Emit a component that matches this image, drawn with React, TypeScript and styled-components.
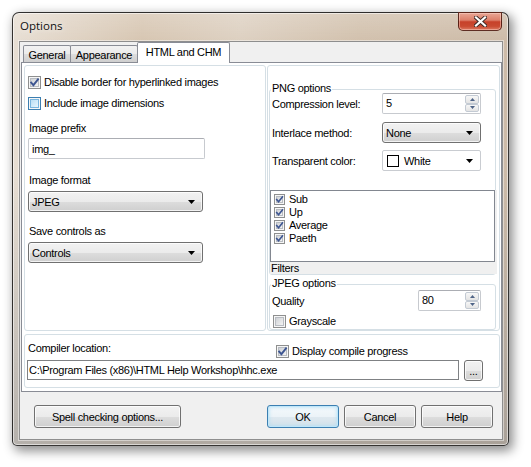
import React from 'react'
import styled, { createGlobalStyle, css } from 'styled-components'

const GlobalStyle = createGlobalStyle`
  html, body {
    margin: 0;
    padding: 0;
    background: #fff;
  }
  body {
    font-family: "Liberation Sans", Arial, sans-serif;
    font-size: 11px;
    letter-spacing: -0.3px;
    color: #000;
  }
`

const Screen = styled.div`
  width: 531px;
  height: 467px;
  padding: 12px 0 0 12px;
  box-sizing: border-box;
`

const Window = styled.div`
  width: 497px;
  height: 434px;
  box-sizing: border-box;
  display: flex;
  flex-direction: column;
  padding: 0 5px 5px 6px;
  border: 1px solid rgba(25, 25, 25, 0.85);
  border-radius: 7px 7px 5px 5px;
  background:
    linear-gradient(180deg, rgba(255, 255, 255, 0.2) 0px, rgba(255, 255, 255, 0) 28px, rgba(150, 150, 150, 0) 160px, rgba(140, 140, 140, 0.55) 100%),
    linear-gradient(90deg, #e7ded3 0%, #d7c6b2 26%, #ddd0c1 46%, #d2c1ad 70%, #cdbba8 100%);
  box-shadow: 3px 4px 11px 1px rgba(0, 0, 0, 0.45), inset 0 0 0 1px rgba(255, 255, 255, 0.55);
`

const TitleBar = styled.div`
  height: 28px;
  flex: none;
  display: flex;
  align-items: flex-start;
`

const Title = styled.span`
  margin: 5px 0 0 1px;
  font-family: "Open Sans", "Noto Sans", sans-serif;
  font-size: 11.5px;
  letter-spacing: 0;
  line-height: 16px;
  color: #111;
  text-shadow: 0 0 6px rgba(255, 255, 255, 0.9);
`

const CloseButton = styled.div`
  margin: -1px 1px 0 auto;
  width: 44px;
  height: 19px;
  box-sizing: border-box;
  border: 1px solid rgba(70, 25, 15, 0.85);
  border-radius: 0 0 5px 5px;
  background: linear-gradient(to bottom, #e9a695 0%, #dc7f6a 42%, #c7412a 52%, #c94a31 78%, #dd7a62 100%);
  box-shadow: inset 0 0 0 1px rgba(255, 220, 210, 0.45);
  display: flex;
  align-items: center;
  justify-content: center;
`

const Client = styled.div`
  flex: 1;
  display: flex;
  flex-direction: column;
  background: #f0f0f0;
  border: 1px solid #8e8e8e;
  box-shadow: 0 0 0 1px rgba(255, 255, 255, 0.45);
`

const TabStrip = styled.div`
  height: 20px;
  display: flex;
  align-items: flex-end;
  padding-left: 3px;
`

const Tab = styled.div<{ $active?: boolean; $w: number }>`
  width: ${p => p.$w}px;
  box-sizing: border-box;
  display: flex;
  align-items: center;
  justify-content: center;
  border: 1px solid #898c95;
  border-bottom: none;
  border-radius: 2px 2px 0 0;
  margin-right: -1px;
  ${p => p.$active
    ? css`
      height: 21px;
      margin-bottom: -1px;
      padding-bottom: 2px;
      background: #fff;
      position: relative;
      z-index: 1;
    `
    : css`
      height: 17px;
      padding-top: 1px;
      background: linear-gradient(to bottom, #f2f2f2 0%, #ebebeb 50%, #dddddd 51%, #cfcfcf 100%);
    `}
`

const TabPage = styled.div`
  margin-left: 1px;
  width: 481px;
  height: 330px;
  box-sizing: border-box;
  border: 1px solid #898c95;
  background: #fff;
  padding: 2px 1px 3px 2px;
  display: flex;
  flex-direction: column;
  gap: 3px;
`

const TopRow = styled.div`
  display: flex;
  gap: 1px;
  height: 266px;
`

const Group = styled.div<{ $w?: number; $h?: number }>`
  ${p => p.$w ? css`width: ${p.$w}px;` : css`flex: 1;`}
  ${p => p.$h ? css`height: ${p.$h}px;` : ''}
  box-sizing: border-box;
  border: 1px solid #d5dfe5;
  border-radius: 3px;
  display: flex;
  flex-direction: column;
`

const LeftGroup = styled(Group)`
  padding: 10px 0 0 3px;
`

const Label = styled.div<{ $mt?: number; $mb?: number }>`
  line-height: 13px;
  margin: ${p => p.$mt ?? 0}px 0 ${p => p.$mb ?? 0}px 1px;
`

const CheckRow = styled.div<{ $mb?: number; $gap?: number; $h?: number }>`
  display: flex;
  align-items: center;
  height: ${p => p.$h ?? 13}px;
  gap: ${p => p.$gap ?? 3}px;
  margin-bottom: ${p => p.$mb ?? 0}px;
  line-height: 13px;
`

const CheckOuter = styled.span<{ $size: number; $hover?: boolean }>`
  position: relative;
  flex: none;
  width: ${p => p.$size}px;
  height: ${p => p.$size}px;
  box-sizing: border-box;
  padding: 1px;
  border: 1px solid ${p => p.$hover ? '#3c7fb1' : '#8e8f8f'};
  background: #f6f6f6;
  display: flex;
`

const CheckInner = styled.span<{ $hover?: boolean }>`
  flex: 1;
  border: 1px solid ${p => p.$hover ? '#79b5de' : '#b8bcc2'};
  background: ${p => p.$hover
    ? 'linear-gradient(135deg, #b9def4 0%, #e7f5fd 100%)'
    : 'linear-gradient(135deg, #cfd2d6 0%, #f3f3f3 100%)'};
`

const CheckMark = styled.svg`
  position: absolute;
  left: -1px;
  top: -1px;
`

const TextBox = styled.div<{ $w: number; $h: number; $dark?: boolean }>`
  width: ${p => p.$w}px;
  height: ${p => p.$h}px;
  box-sizing: border-box;
  background: #fff;
  display: flex;
  align-items: center;
  padding-left: ${p => p.$dark ? 1 : 3}px;
  ${p => p.$dark
    ? css`border: 1px solid #7f8184;`
    : css`
      border: 1px solid #c7cacf;
      border-top-color: #abadb3;
      border-radius: 2px;
    `}
`

const ComboBox = styled.div<{ $w: number; $plain?: boolean }>`
  width: ${p => p.$w}px;
  height: 21px;
  box-sizing: border-box;
  display: flex;
  align-items: center;
  gap: 5px;
  padding: 0 7px 0 3px;
  ${p => p.$plain
    ? css`
      border: 1px solid #c9ccd1;
      border-radius: 2px;
      background: #fff;
      padding-left: 4px;
    `
    : css`
      border: 1px solid #707070;
      border-radius: 3px;
      background: linear-gradient(to bottom, #f2f2f2 0%, #ebebeb 50%, #dddddd 51%, #cfcfcf 100%);
      box-shadow: inset 0 0 0 1px rgba(255, 255, 255, 0.75);
    `}
`

const ComboText = styled.span`
  flex: 1;
`

const Swatch = styled.span`
  width: 12px;
  height: 12px;
  box-sizing: border-box;
  border: 1px solid #000;
  background: #fff;
  flex: none;
`

const SpinBox = styled.div<{ $w: number }>`
  width: ${p => p.$w}px;
  height: 21px;
  box-sizing: border-box;
  border: 1px solid #c7cacf;
  border-top-color: #abadb3;
  border-radius: 2px;
  background: #fff;
  display: flex;
  align-items: stretch;
  padding: 1px 1px 1px 3px;
`

const SpinValue = styled.span`
  flex: 1;
  line-height: 17px;
`

const SpinButtons = styled.div`
  width: 14px;
  display: flex;
  flex-direction: column;
`

const SpinButton = styled.div`
  flex: 1;
  box-sizing: border-box;
  border: 1px solid #c3cad3;
  border-radius: 2px;
  background: linear-gradient(to bottom, #f7f7f7, #e4e4e4);
  display: flex;
  align-items: center;
  justify-content: center;
`

const RightGroup = styled(Group)`
  padding: 0 3px 0 1px;
`

const FieldBox = styled.div<{ $mt: number; $pb?: number }>`
  margin-top: ${p => p.$mt}px;
  border: 1px solid #d5dfe5;
  border-radius: 3px;
  display: flex;
  flex-direction: column;
  padding-bottom: ${p => p.$pb ?? 0}px;
`

const Legend = styled.span`
  align-self: flex-start;
  margin: -8px 0 -2px 1px;
  padding: 0 1px;
  background: #fff;
  line-height: 13px;
`

const FieldRow = styled.div<{ $mt?: number }>`
  display: flex;
  align-items: center;
  margin-top: ${p => p.$mt ?? 0}px;
`

const FieldLabel = styled.span<{ $w: number }>`
  width: ${p => p.$w}px;
  padding-left: 2px;
  box-sizing: border-box;
`

const FiltersPanel = styled.div`
  margin: 19px -2px 0 0;
  background: #f0f0f0;
  display: flex;
  flex-direction: column;
`

const ListBox = styled.div`
  height: 72px;
  box-sizing: border-box;
  margin-right: 2px;
  border: 1px solid #828790;
  background: #fff;
  padding: 2px 0 0 3px;
  display: flex;
  flex-direction: column;
`

const FiltersCaption = styled.div`
  height: 12px;
  line-height: 12px;
  padding-left: 1px;
`

const CompilerGroup = styled(Group)`
  padding: 7px 0 0 2px;
`

const CompilerTop = styled.div`
  display: flex;
  align-items: flex-start;
  height: 18px;
`

const CompilerBottom = styled.div`
  display: flex;
  gap: 5px;
`

const ButtonRow = styled.div`
  margin-top: 13px;
  display: flex;
  gap: 5px;
  padding: 0 9px 0 14px;
`

const Button = styled.div<{ $w: number; $h?: number; $default?: boolean }>`
  width: ${p => p.$w}px;
  height: ${p => p.$h ?? 23}px;
  box-sizing: border-box;
  display: flex;
  align-items: center;
  justify-content: center;
  border-radius: 3px;
  background: linear-gradient(to bottom, #f2f2f2 0%, #ebebeb 50%, #dddddd 51%, #cfcfcf 100%);
  ${p => p.$default
    ? css`
      border: 1px solid #3c7fb1;
      background: linear-gradient(to bottom, #f4f9fc 0%, #ecf3f8 50%, #dfe9f0 51%, #d3e1ea 100%);
      box-shadow: inset 0 0 0 1px #bfe7fa, inset 0 0 3px 2px rgba(170, 220, 245, 0.55);
    `
    : css`
      border: 1px solid #707070;
      box-shadow: inset 0 0 0 1px rgba(255, 255, 255, 0.75);
    `}
`

const Spacer = styled.div`
  flex: 1;
`

const Check = ({ checked, hover, size = 13 }: { checked?: boolean; hover?: boolean; size?: number }) => (
  <CheckOuter $size={size} $hover={hover}>
    <CheckInner $hover={hover} />
    {checked && (
      <CheckMark width={size} height={size} viewBox="0 0 13 13">
        <path d="M3.2 6.6 L5.4 9.2 L10 3.4" fill="none" stroke="#3d5591" strokeWidth="1.9" strokeLinecap="square" />
      </CheckMark>
    )}
  </CheckOuter>
)

const Arrow = () => (
  <svg width="7" height="4" viewBox="0 0 7 4">
    <path d="M0 0h7L3.5 4z" fill="#000" />
  </svg>
)

const Spin = ({ value, w }: { value: string; w: number }) => (
  <SpinBox $w={w}>
    <SpinValue>{value}</SpinValue>
    <SpinButtons>
      <SpinButton>
        <svg width="5" height="3" viewBox="0 0 5 3"><path d="M0 3h5L2.5 0z" fill="#4f6487" /></svg>
      </SpinButton>
      <SpinButton>
        <svg width="5" height="3" viewBox="0 0 5 3"><path d="M0 0h5L2.5 3z" fill="#4f6487" /></svg>
      </SpinButton>
    </SpinButtons>
  </SpinBox>
)

const filters = ['Sub', 'Up', 'Average', 'Paeth']

export default function App() {
  return (
    <Screen>
      <GlobalStyle />
      <Window>
        <TitleBar>
          <Title>Options</Title>
          <CloseButton>
            <svg width="13" height="11" viewBox="0 0 13 11">
              <path d="M2 1.5 L11 9.5 M11 1.5 L2 9.5" stroke="#3b2a26" strokeWidth="4" strokeLinecap="square" />
              <path d="M2 1.5 L11 9.5 M11 1.5 L2 9.5" stroke="#fff" strokeWidth="2.2" strokeLinecap="square" />
            </svg>
          </CloseButton>
        </TitleBar>
        <Client>
          <TabStrip>
            <Tab $w={48}>General</Tab>
            <Tab $w={68}>Appearance</Tab>
            <Tab $w={93} $active>HTML and CHM</Tab>
          </TabStrip>
          <TabPage>
            <TopRow>
              <LeftGroup $w={242}>
                <CheckRow $mb={8}>
                  <Check checked />
                  <span>Disable border for hyperlinked images</span>
                </CheckRow>
                <CheckRow $mb={12}>
                  <Check hover />
                  <span>Include image dimensions</span>
                </CheckRow>
                <Label $mb={3}>Image prefix</Label>
                <TextBox $w={177} $h={21}>img_</TextBox>
                <Label $mt={15} $mb={4}>Image format</Label>
                <ComboBox $w={175}>
                  <ComboText>JPEG</ComboText>
                  <Arrow />
                </ComboBox>
                <Label $mt={13} $mb={4}>Save controls as</Label>
                <ComboBox $w={175}>
                  <ComboText>Controls</ComboText>
                  <Arrow />
                </ComboBox>
              </LeftGroup>
              <RightGroup>
                <FieldBox $mt={23}>
                  <Legend>PNG options</Legend>
                  <FieldRow>
                    <FieldLabel $w={112}>Compression level:</FieldLabel>
                    <Spin value="5" w={99} />
                  </FieldRow>
                  <FieldRow $mt={8}>
                    <FieldLabel $w={112}>Interlace method:</FieldLabel>
                    <ComboBox $w={99}>
                      <ComboText>None</ComboText>
                      <Arrow />
                    </ComboBox>
                  </FieldRow>
                  <FieldRow $mt={7}>
                    <FieldLabel $w={112}>Transparent color:</FieldLabel>
                    <ComboBox $w={99} $plain>
                      <Swatch />
                      <ComboText>White</ComboText>
                      <Arrow />
                    </ComboBox>
                  </FieldRow>
                  <FiltersPanel>
                    <ListBox>
                      {filters.map(f => (
                        <CheckRow key={f} $gap={4}>
                          <Check checked size={11} />
                          <span>{f}</span>
                        </CheckRow>
                      ))}
                    </ListBox>
                    <FiltersCaption>Filters</FiltersCaption>
                  </FiltersPanel>
                </FieldBox>
                <FieldBox $mt={9} $pb={1}>
                  <Legend>JPEG options</Legend>
                  <FieldRow $mt={2}>
                    <FieldLabel $w={148}>Quality</FieldLabel>
                    <Spin value="80" w={63} />
                  </FieldRow>
                  <CheckRow $gap={3} style={{ marginTop: 4, marginLeft: 3 }}>
                    <Check />
                    <span>Grayscale</span>
                  </CheckRow>
                </FieldBox>
              </RightGroup>
            </TopRow>
            <CompilerGroup $h={54}>
              <CompilerTop>
                <Label style={{ width: 248 }}>Compiler location:</Label>
                <CheckRow $gap={3} style={{ marginTop: 3 }}>
                  <Check checked />
                  <span>Display compile progress</span>
                </CheckRow>
              </CompilerTop>
              <CompilerBottom>
                <TextBox $w={432} $h={20} $dark>C:\Program Files (x86)\HTML Help Workshop\hhc.exe</TextBox>
                <Button $w={19} $h={21}>...</Button>
              </CompilerBottom>
            </CompilerGroup>
          </TabPage>
          <ButtonRow>
            <Button $w={147}>Spell checking options...</Button>
            <Spacer />
            <Button $w={72} $default>OK</Button>
            <Button $w={72}>Cancel</Button>
            <Button $w={72}>Help</Button>
          </ButtonRow>
        </Client>
      </Window>
    </Screen>
  )
}
